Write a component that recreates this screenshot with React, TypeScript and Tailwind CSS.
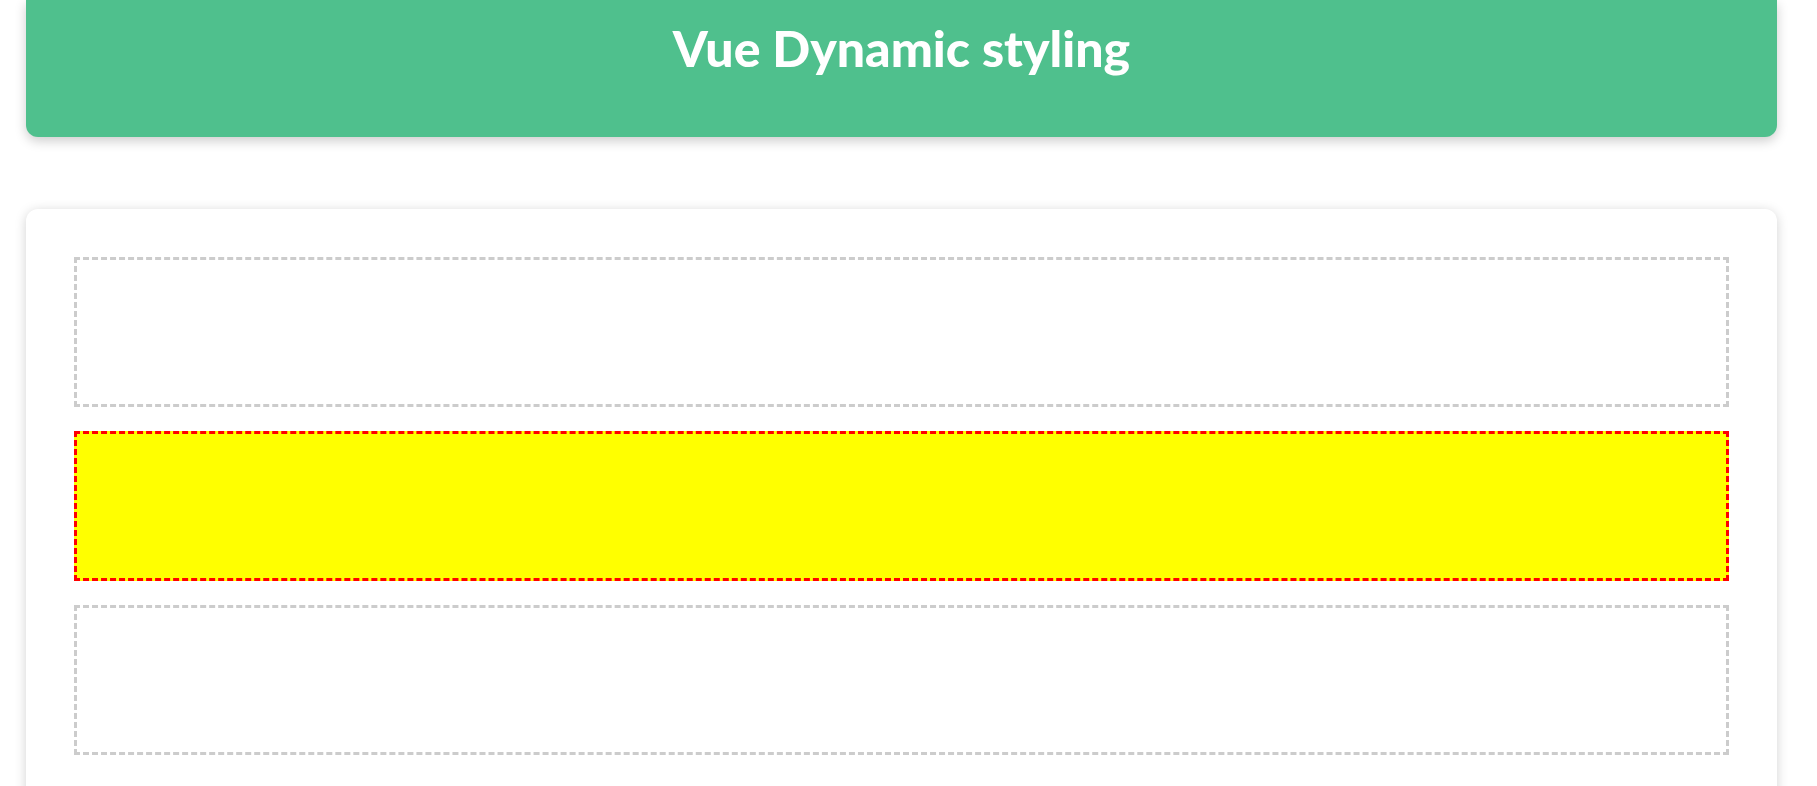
const boxes = [
  { id: 1, active: false },
  { id: 2, active: true },
  { id: 3, active: false },
];

export default function App() {
  return (
    <div className="min-h-screen bg-white pb-10" style={{ fontFamily: "Lato, 'Open Sans', sans-serif" }}>
      <header className="ml-[26px] flex h-[137px] w-[1751px] items-start justify-center rounded-b-[12px] bg-[#4fc08d] pt-[18px] shadow-[0_4px_12px_rgba(0,0,0,0.2)]">
        <h1 className="text-[50px] font-black leading-[60px] text-white">Vue Dynamic styling</h1>
      </header>

      <section className="ml-[26px] mt-[72px] flex w-[1751px] flex-col gap-6 rounded-[12px] bg-white p-12 shadow-[0_2px_12px_rgba(0,0,0,0.18)]">
        {boxes.map((box) => (
          <div
            key={box.id}
            className={`h-[150px] border-[3px] border-dashed ${
              box.active ? "border-[#ff0000] bg-[#ffff00]" : "border-[#cccccc] bg-white"
            }`}
          />
        ))}
      </section>
    </div>
  );
}
